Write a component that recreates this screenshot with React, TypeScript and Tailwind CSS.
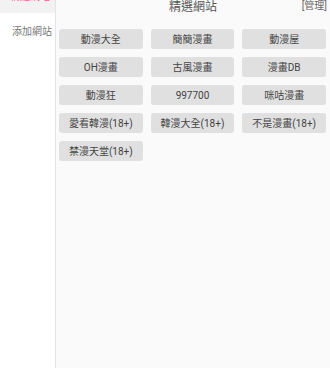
const sites = [
  "動漫大全",
  "簡簡漫畫",
  "動漫屋",
  "OH漫畫",
  "古風漫畫",
  "漫畫DB",
  "動漫狂",
  "997700",
  "咪咕漫畫",
  "愛看韓漫(18+)",
  "韓漫大全(18+)",
  "不是漫畫(18+)",
  "禁漫天堂(18+)",
];

export default function App() {
  return (
    <div
      className="flex h-[368px] w-[330px] overflow-hidden bg-white"
      style={{ fontFamily: 'Roboto, "Noto Sans CJK TC", sans-serif' }}
    >
      {/* Sidebar */}
      <aside className="w-[56px] shrink-0 border-r border-[#e4e4e4] bg-white">
        <div className="-mt-[20px] flex h-[33px] items-center justify-end bg-[#f2f2f2] pr-[5px] text-[10px] text-[#ec5f8c]">
          精選網站
        </div>
        <div className="flex h-[36px] items-center justify-end pr-[3px] text-[10px] text-[#777]">
          添加網站
        </div>
      </aside>

      {/* Content */}
      <main className="flex-1 bg-[#fafafa]">
        <header className="grid h-[29px] grid-cols-[1fr_auto_1fr] items-start">
          <span />
          <h1 className="text-[12px] leading-[14px] text-[#555]">精選網站</h1>
          <span className="justify-self-end pr-[3px] text-[10px] leading-[11px] text-[#666]">[管理]</span>
        </header>

        <div className="grid grid-cols-3 gap-[8px] pl-[3px] pr-[4px]">
          {sites.map((name) => (
            <button
              key={name}
              className="flex h-[20px] items-center justify-center rounded-[3px] bg-[#e0e0e0] text-[10px] text-[#444]"
            >
              {name}
            </button>
          ))}
        </div>
      </main>
    </div>
  );
}
